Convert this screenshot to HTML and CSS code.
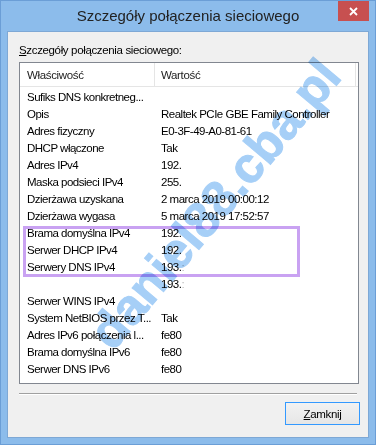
FILE: index.html
```html
<!DOCTYPE html>
<html lang="pl">
<head>
  <meta charset="UTF-8" />
  <meta name="viewport" content="width=device-width, initial-scale=1.0" />
  <title>Szczegóły połączenia sieciowego</title>
  <link rel="stylesheet" href="styles.css">
</head>
<body>
  <div class="window">
    <div class="titlebar">
      <span></span>
      <div class="title">Szczegóły połączenia sieciowego</div>
      <div class="close">
        <svg width="9" height="9" viewBox="0 0 9 9">
          <path d="M1 1 L8 8 M8 1 L1 8" stroke="#fff" stroke-width="1.8" fill="none" />
        </svg>
      </div>
    </div>

    <div class="panel">
      <div class="label"><u>S</u>zczegóły połączenia sieciowego:</div>

      <div class="list">
        <div class="list-head">
          <div class="head-col">Właściwość</div>
          <div class="head-col">Wartość</div>
        </div>
        <div class="list-body">
          <div class="row"><span>Sufiks DNS konkretneg...</span><span></span></div>
          <div class="row"><span>Opis</span><span>Realtek PCIe GBE Family Controller</span></div>
          <div class="row"><span>Adres fizyczny</span><span>E0-3F-49-A0-81-61</span></div>
          <div class="row"><span>DHCP włączone</span><span>Tak</span></div>
          <div class="row"><span>Adres IPv4</span><span>192.</span></div>
          <div class="row"><span>Maska podsieci IPv4</span><span>255.</span></div>
          <div class="row"><span>Dzierżawa uzyskana</span><span>2 marca 2019 00:00:12</span></div>
          <div class="row"><span>Dzierżawa wygasa</span><span>5 marca 2019 17:52:57</span></div>
          <div class="row"><span>Brama domyślna IPv4</span><span>192.</span></div>
          <div class="row"><span>Serwer DHCP IPv4</span><span>192.</span></div>
          <div class="row"><span>Serwery DNS IPv4</span><span>193.<i class="faint">:</i></span></div>
          <div class="row"><span></span><span>193.<i class="faint">:</i></span></div>
          <div class="row"><span>Serwer WINS IPv4</span><span></span></div>
          <div class="row"><span>System NetBIOS przez T...</span><span>Tak</span></div>
          <div class="row"><span>Adres IPv6 połączenia l...</span><span>fe80</span></div>
          <div class="row"><span>Brama domyślna IPv6</span><span>fe80</span></div>
          <div class="row"><span>Serwer DNS IPv6</span><span>fe80</span></div>
        </div>
        <!-- highlight around gateway / dhcp / dns rows -->
        <div class="mark"></div>
      </div>

      <div class="separator"></div>

      <div class="actions">
        <button class="btn"><u>Z</u>amknij</button>
      </div>
    </div>

    <div class="watermark">daniel88.cba.pl</div>
  </div>
</body>
</html>
```

FILE: styles.css
```css
html, body {
  margin: 0;
  padding: 0;
  background-color: #8cbceb;
}
.window {
  position: relative;
  width: 376px;
  height: 445px;
  box-sizing: border-box;
  border: 1px solid #6b9ed6;
  background-color: #8cbceb;
  padding: 0 6px 6px 6px;
  display: flex;
  flex-direction: column;
  overflow: hidden;
  font-family: 'Liberation Sans', Arial, sans-serif;
  font-size: 11.5px;
  letter-spacing: -0.5px;
  color: #000;
}
.titlebar {
  height: 30px;
  display: grid;
  grid-template-columns: 1fr auto 1fr;
}
.title {
  font-size: 15px;
  letter-spacing: 0;
  color: #222;
  line-height: 30px;
}
.close {
  justify-self: end;
  width: 31px;
  height: 20px;
  background-color: #c75050;
  display: flex;
  justify-content: center;
  align-items: center;
}
.panel {
  flex: 1;
  background-color: #f0f0f0;
  border: 1px solid #7ea8d5;
  padding: 11px 9px 12px 11px;
  display: flex;
  flex-direction: column;
}
.label {
  line-height: 15px;
  letter-spacing: -0.35px;
  margin-bottom: 4px;
}
.list {
  position: relative;
  background: #fff;
  border: 1px solid #828790;
  padding-bottom: 5px;
}
.list-head {
  display: grid;
  grid-template-columns: 135px 201px 1fr;
  height: 24px;
  box-sizing: border-box;
  border-bottom: 1px solid #e5e5e5;
}
.head-col {
  padding: 4px 0 0 7px;
  line-height: 17px;
  letter-spacing: -0.35px;
  border-right: 1px solid #e5e5e5;
  color: #222;
}
.head-col + .head-col {
  padding-left: 6px;
}
.list-body {
  padding-top: 2px;
}
.row {
  display: grid;
  grid-template-columns: 135px 1fr;
  height: 17px;
  line-height: 17px;
  white-space: nowrap;
}
.row span {
  padding-left: 7px;
  overflow: hidden;
}
.row span + span {
  padding-left: 6px;
}
.faint {
  font-style: normal;
  color: #b8b8b8;
}
.mark {
  position: absolute;
  left: 3px;
  top: 163px;
  width: 277px;
  height: 51px;
  box-sizing: border-box;
  border: 3px solid #c9a2f2;
}
.separator {
  margin: 9px 2px 0 0;
  border-top: 1px solid #a0a0a0;
  border-bottom: 1px solid #fff;
}
.actions {
  display: flex;
  justify-content: flex-end;
  margin: 7px -1px 0 0;
}
.btn {
  width: 75px;
  height: 23px;
  padding: 0;
  border: 1px solid #3399ff;
  background: linear-gradient(#f2f2f2, #e6e6e6);
  font-family: inherit;
  font-size: 11.5px;
  letter-spacing: -0.35px;
  color: #000;
}
.watermark {
  position: absolute;
  left: 214px;
  top: 203px;
  transform: translate(-50%, -50%) rotate(-50deg);
  font-size: 50px;
  font-weight: bold;
  letter-spacing: 0;
  line-height: 1;
  white-space: nowrap;
  color: #a6cff7;
  -webkit-text-stroke: 1px #a6cff7;
  mix-blend-mode: multiply;
  pointer-events: none;
}
```
